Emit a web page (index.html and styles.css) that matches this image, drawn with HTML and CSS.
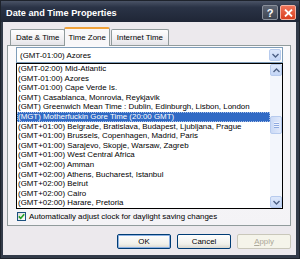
FILE: index.html
```html
<!DOCTYPE html>
<html lang="en">
<head>
    <meta charset="UTF-8">
    <title>Date and Time Properties</title>
    <link rel="stylesheet" href="styles.css">
</head>
<body>
    <div class="window">
        <div class="titlebar">
            <span class="title">Date and Time Properties</span>
            <div class="caption-buttons">
                <div class="cap-btn help">?</div>
                <div class="cap-btn close">
                    <svg width="9" height="8" viewBox="0 0 9 8"><path d="M1 0.5 L8 7.5 M8 0.5 L1 7.5" stroke="#fff" stroke-width="1.8"/></svg>
                </div>
            </div>
        </div>

        <div class="client">
            <div class="tabs">
                <div class="tab">Date &amp; Time</div>
                <div class="tab active">Time Zone</div>
                <div class="tab">Internet Time</div>
            </div>

            <div class="panel">
                <div class="combo">
                    <span class="combo-text">(GMT-01:00) Azores</span>
                    <div class="sb-btn combo-btn">
                        <svg width="7" height="5" viewBox="0 0 7 5"><path d="M0.5 1 L3.5 4 L6.5 1" fill="none" stroke="#4d6185" stroke-width="1.4"/></svg>
                    </div>
                </div>

                <div class="list">
                    <ul class="items">
                        <li>(GMT-02:00) Mid-Atlantic</li>
                        <li>(GMT-01:00) Azores</li>
                        <li>(GMT-01:00) Cape Verde Is.</li>
                        <li>(GMT) Casablanca, Monrovia, Reykjavik</li>
                        <li>(GMT) Greenwich Mean Time : Dublin, Edinburgh, Lisbon, London</li>
                        <li class="selected">(MGT) Motherfuckin Gore Time (20:00 GMT)</li>
                        <li>(GMT+01:00) Belgrade, Bratislava, Budapest, Ljubljana, Prague</li>
                        <li>(GMT+01:00) Brussels, Copenhagen, Madrid, Paris</li>
                        <li>(GMT+01:00) Sarajevo, Skopje, Warsaw, Zagreb</li>
                        <li>(GMT+01:00) West Central Africa</li>
                        <li>(GMT+02:00) Amman</li>
                        <li>(GMT+02:00) Athens, Bucharest, Istanbul</li>
                        <li>(GMT+02:00) Beirut</li>
                        <li>(GMT+02:00) Cairo</li>
                        <li>(GMT+02:00) Harare, Pretoria</li>
                    </ul>
                    <div class="scrollbar">
                        <div class="sb-btn">
                            <svg width="7" height="5" viewBox="0 0 7 5"><path d="M0.5 4 L3.5 1 L6.5 4" fill="none" stroke="#4d6185" stroke-width="1.4"/></svg>
                        </div>
                        <div class="track">
                            <div class="thumb"><span class="grip"></span></div>
                        </div>
                        <div class="sb-btn">
                            <svg width="7" height="5" viewBox="0 0 7 5"><path d="M0.5 1 L3.5 4 L6.5 1" fill="none" stroke="#4d6185" stroke-width="1.4"/></svg>
                        </div>
                    </div>
                </div>

                <label class="check">
                    <span class="box">
                        <svg width="7" height="7" viewBox="0 0 7 7"><path d="M0.8 3.4 L2.7 5.4 L6.2 1.2" fill="none" stroke="#21a121" stroke-width="1.6"/></svg>
                    </span>
                    Automatically adjust clock for daylight saving changes
                </label>
            </div>

            <div class="buttons">
                <button class="btn default">OK</button>
                <button class="btn">Cancel</button>
                <button class="btn disabled"><u>A</u>pply</button>
            </div>
        </div>
    </div>
</body>
</html>
```

FILE: styles.css
```css
body {
    margin: 0;
    font-family: "Liberation Sans", Arial, sans-serif;
    background-color: #2f3745;
}

.window {
    width: 300px;
    height: 259px;
    display: flex;
    flex-direction: column;
    background: #333b49;
    box-sizing: border-box;
    border: 1px solid #1e232c;
}

.titlebar {
    height: 21px;
    flex-shrink: 0;
    display: flex;
    align-items: center;
    justify-content: space-between;
    padding: 0 3px 0 5px;
    background: linear-gradient(#4a5366, #2a3346 30%, #1f2636);
}

.title {
    color: #fff;
    font-weight: bold;
    font-size: 9.2px;
    padding-top: 2px;
}

.caption-buttons {
    display: flex;
    gap: 2px;
    padding-top: 2px;
}

.cap-btn {
    width: 14px;
    height: 13px;
    border: 1px solid #8a909b;
    border-radius: 2px;
    display: flex;
    align-items: center;
    justify-content: center;
    color: #fff;
    font-weight: bold;
    font-size: 11px;
}

.help {
    background: linear-gradient(#5f6674, #3e4552);
}

.close {
    background: linear-gradient(#f0745a, #d9401f);
    border-color: #f3b3a3;
}

.client {
    flex: 1;
    margin: 0 3px 3px 2px;
    background: #ece9ed;
    padding: 4px 5px 6px 4px;
    display: flex;
    flex-direction: column;
    font-size: 7.9px;
    color: #000;
}

.tabs {
    display: flex;
    align-items: flex-end;
    height: 19px;
    padding-left: 3px;
}

.tab {
    height: 16px;
    box-sizing: border-box;
    padding: 0 5px;
    line-height: 15px;
    border: 1px solid #919b9c;
    border-bottom: none;
    border-radius: 2px 2px 0 0;
    background: linear-gradient(#fefefe, #f1f0f2 60%, #e4e3e8);
    margin-right: -1px;
}

.tab.active {
    height: 19px;
    line-height: 17px;
    padding: 0 3px;
    background: #f8f7f9;
    border-top: 2px solid #f0a23a;
    position: relative;
    margin: 0 1px 0 0;
    z-index: 1;
    margin-bottom: -1px;
}

.panel {
    height: 181px;
    box-sizing: border-box;
    border: 1px solid #919b9c;
    background: linear-gradient(#fbfafc, #f4f3f6);
    padding: 1px 7px 0 8px;
}

.combo {
    height: 16px;
    box-sizing: border-box;
    border: 1px solid #7f9db9;
    background: #fff;
    display: flex;
    align-items: center;
    justify-content: space-between;
    padding: 0 1px 0 3px;
}

.combo-btn {
    height: 12px;
}

.sb-btn {
    width: 12px;
    height: 12px;
    flex-shrink: 0;
    box-sizing: border-box;
    border: 1px solid #b7cbee;
    border-radius: 2px;
    background: linear-gradient(#dde8fb, #c4d6f6);
    display: flex;
    align-items: center;
    justify-content: center;
}

.list {
    height: 146px;
    box-sizing: border-box;
    border: 1px solid #000;
    background: #fff;
    display: flex;
}

.items {
    list-style: none;
    margin: 0;
    padding: 0;
    flex: 1;
    overflow: hidden;
    white-space: nowrap;
}

.items li {
    height: 9.6px;
    line-height: 9.6px;
    padding-left: 1px;
}

.items li.selected {
    background: #316ac5;
    color: #fff;
    outline: 1px dotted #aac0e6;
    outline-offset: -1px;
}

.scrollbar {
    width: 12px;
    display: flex;
    flex-direction: column;
    background: #f3f6fc;
}

.track {
    flex: 1;
    padding-top: 40px;
}

.thumb {
    height: 18px;
    box-sizing: border-box;
    border: 1px solid #b7cbee;
    border-radius: 2px;
    background: linear-gradient(90deg, #cbdaf6, #e0e9fb);
    display: flex;
    align-items: center;
    justify-content: center;
}

.grip {
    width: 5px;
    height: 6px;
    background: repeating-linear-gradient(#eef3fd 0 1px, #8faae0 1px 2px);
}

.check {
    display: flex;
    align-items: center;
    gap: 3px;
    margin-top: 2px;
    height: 10px;
    padding-left: 1px;
}

.box {
    width: 9px;
    height: 9px;
    box-sizing: border-box;
    border: 1px solid #1c5180;
    background: linear-gradient(135deg, #dcdcd7, #fff);
    display: flex;
    align-items: center;
    justify-content: center;
}

.buttons {
    display: flex;
    justify-content: flex-end;
    gap: 6px;
    margin-top: 8px;
}

.btn {
    width: 54px;
    height: 15px;
    box-sizing: border-box;
    padding: 0;
    font-family: "Liberation Sans", Arial, sans-serif;
    font-size: 7.9px;
    color: #000;
    border: 1px solid #003c74;
    border-radius: 2px;
    background: linear-gradient(#fefefe, #f0f0ea 70%, #d8d6ce);
}

.btn.default {
    box-shadow: inset 0 0 0 1px #8db2e3;
}

.btn.disabled {
    color: #aca899;
    border-color: #c9c7ba;
    background: #f5f4ea;
}
```
